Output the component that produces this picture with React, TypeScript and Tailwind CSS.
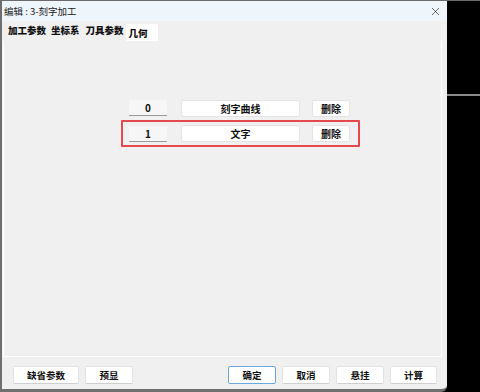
import { X } from 'lucide-react';

const font = { fontFamily: '"Noto Sans CJK SC", "Noto Sans", sans-serif' };

function Btn({ label, w, focus }: { label: string; w: string; focus?: boolean }) {
  return (
    <div
      className={`${w} h-[18px] flex items-center justify-center rounded-[2px] bg-white text-[9.5px] font-bold text-[#111] ${
        focus ? 'border border-[#6aa8e0]' : 'border border-[#e2e2e2] border-b-[#cfcfcf]'
      }`}
    >
      {label}
    </div>
  );
}

function Row({ idx, name, marked }: { idx: string; name: string; marked?: boolean }) {
  return (
    <div
      className={`w-[239px] flex items-center pl-[6px] ${
        marked ? 'h-[27px] border-2 border-[#e5484d] rounded-[1px]' : 'h-[16px] border-2 border-transparent'
      }`}
    >
      <div className="w-[38px] h-[16px] flex items-center justify-center bg-[#f6f6f6] border-b border-[#9a9a9a] text-[10px] font-bold text-[#111]">
        {idx}
      </div>
      <div className="ml-[14px] w-[119px] h-[17px] flex items-center justify-center bg-white border border-[#e4e4e4] rounded-[2px] text-[10px] font-bold text-[#111]">
        {name}
      </div>
      <div className="ml-[12px] w-[38px] h-[17px] flex items-center justify-center bg-white border border-[#e4e4e4] rounded-[2px] text-[10px] font-bold text-[#111]">
        删除
      </div>
    </div>
  );
}

export default function App() {
  return (
    <div className="w-[480px] h-[392px] bg-black flex overflow-hidden border-t border-[#6b6b6b]" style={font}>
      {/* Dialog */}
      <div className="w-[447px] h-full flex flex-col bg-[#f0f0f0] border-l-2 border-b-[3px] border-[#6f6f6f] rounded-br-[6px] overflow-hidden">
        {/* Title bar */}
        <div className="h-[20px] flex items-center justify-between bg-[#eef5fb] pl-[2px] pr-[4px]">
          <span className="text-[9.5px] text-[#222]">编辑 : 3-刻字加工</span>
          <X size={13} strokeWidth={1.3} className="text-[#333] mr-[1px]" />
        </div>

        {/* Tabs */}
        <div className="h-[20px] flex items-end pl-[6px] text-[9.5px] font-extrabold text-[#111]">
          <span className="pb-[4px]">加工参数</span>
          <span className="ml-[5px] pb-[4px]">坐标系</span>
          <span className="ml-[6px] pb-[4px]">刀具参数</span>
          <span className="ml-[2px] w-[32px] h-[17px] bg-white pl-[3px] pt-[2px]">几何</span>
        </div>

        {/* Panel */}
        <div className="flex-1 mx-[1px] mr-[5px] border-l border-r border-b border-white bg-[#f0f0f0] flex flex-col pt-[59px] pl-[117px]">
          <Row idx="0" name="刻字曲线" />
          <div className="h-[4px]" />
          <Row idx="1" name="文字" marked />
        </div>

        {/* Bottom buttons */}
        <div className="h-[32px] flex items-center pl-[11px] pr-[10px] pt-[4px]">
          <Btn label="缺省参数" w="w-[66px]" />
          <div className="ml-[6px]">
            <Btn label="预显" w="w-[48px]" />
          </div>
          <div className="ml-auto flex gap-[6px]">
            <Btn label="确定" w="w-[48px]" focus />
            <Btn label="取消" w="w-[48px]" />
            <Btn label="悬挂" w="w-[48px]" />
            <Btn label="计算" w="w-[47px]" />
          </div>
        </div>
      </div>

      {/* Background behind dialog */}
      <div className="flex-1 flex flex-col">
        <div className="h-[93px]" />
        <div className="h-[2px] bg-[#8a8a8a]" />
      </div>
    </div>
  );
}
